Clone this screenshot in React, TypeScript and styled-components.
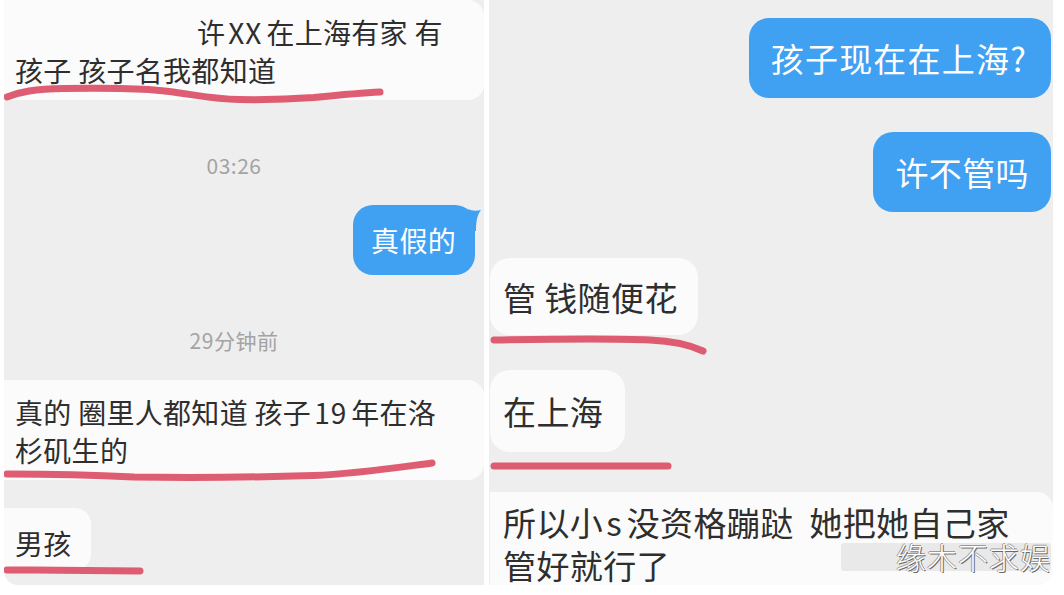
import React from 'react'
import styled, { createGlobalStyle, css } from 'styled-components'

const red = '#dc4f67'
const blue = '#40a0f1'

const GlobalStyle = createGlobalStyle`
  html, body {
    margin: 0;
    padding: 0;
    background: #ffffff;
  }
  body {
    font-family: "Noto Sans CJK SC", "Noto Sans", sans-serif;
  }
`

type Side = 'in' | 'out'
type Size = 'sm' | 'lg'

type Mark = { top: number; width: number; height: number; d: string }

function Underline({ mark }: { mark: Mark }) {
  return (
    <MarkSvg
      style={{ top: mark.top }}
      width={mark.width}
      height={mark.height}
      viewBox={`0 0 ${mark.width} ${mark.height}`}
    >
      <path d={mark.d} fill="none" stroke={red} strokeWidth={7} strokeLinecap="round" strokeLinejoin="round" opacity={0.92} />
    </MarkSvg>
  )
}

function Tail() {
  return (
    <TailSvg width="14" height="22" viewBox="0 0 14 22">
      <path d="M0 0 C4 2 8 2 13 1 C10 5 8 10 8 22 L0 22 Z" fill={blue} />
    </TailSvg>
  )
}

export default function App() {
  return (
    <>
      <GlobalStyle />
      <Page>
        <Panel $corner="left">
          <Row $side="in" $gap={0}>
            <Bubble $tone="white" $size="sm" $cut style={{ width: '100%' }}>
              <Line $indent={182}>
                许<Latin>XX</Latin>在上海有家 有
              </Line>
              <Line>孩子 孩子名我都知道</Line>
            </Bubble>
            <Underline
              mark={{
                top: 84,
                width: 380,
                height: 22,
                d: 'M3 13 C16 8 30 5 60 4.5 C100 4 125 4 150 6 C185 9 205 15 235 15.5 C265 16 290 15 310 13.5 C335 11 355 9 376 8',
              }}
            />
          </Row>
          <Stamp $gap={51}>03:26</Stamp>
          <Row $side="out" $gap={26} $inset={9}>
            <Bubble $tone="blue" $size="sm">
              真假的
              <Tail />
            </Bubble>
          </Row>
          <Stamp $gap={51}>29分钟前</Stamp>
          <Row $side="in" $gap={26}>
            <Bubble $tone="white" $size="sm" $cut style={{ width: '100%' }}>
              <Line>
                真的 圈里人都知道 孩子<Latin>19</Latin>年在洛
              </Line>
              <Line>杉矶生的</Line>
            </Bubble>
            <Underline
              mark={{
                top: 75,
                width: 432,
                height: 28,
                d: 'M3 19 C40 19 90 20 130 22 C200 23 260 22 310 20.5 C350 19 390 13 428 8',
              }}
            />
          </Row>
          <Row $side="in" $gap={28}>
            <Bubble $tone="white" $size="sm" $cut $short>
              男孩
            </Bubble>
            <Underline mark={{ top: 58, width: 140, height: 12, d: 'M3 4 C50 4 100 5 136 5' }} />
          </Row>
        </Panel>

        <Panel $corner="right">
          <Row $side="out" $gap={18} $inset={2}>
            <Bubble $tone="blue" $size="lg" $loose>
              孩子现在在上海?
            </Bubble>
          </Row>
          <Row $side="out" $gap={34} $inset={2}>
            <Bubble $tone="blue" $size="lg">
              许不管吗
            </Bubble>
          </Row>
          <Row $side="in" $gap={46} $inset={1}>
            <Bubble $tone="white" $size="lg">
              管 钱随便花
            </Bubble>
            <Underline
              mark={{ top: 75, width: 220, height: 24, d: 'M4 7 C60 6 120 5 160 7 C185 8 200 12 213 18' }}
            />
          </Row>
          <Row $side="in" $gap={35} $inset={1}>
            <Bubble $tone="white" $size="lg" $tall>
              在上海
            </Bubble>
            <Underline mark={{ top: 90, width: 182, height: 12, d: 'M4 6 C60 6 120 6 178 6' }} />
          </Row>
          <Row $side="in" $gap={40} $inset={1}>
            <Bubble $tone="white" $size="lg" $cut $wide style={{ width: '100%' }}>
              <Line>
                所以小<Latin>s</Latin>没资格蹦跶&nbsp; 她把她自己家
              </Line>
              <Line>管好就行了</Line>
            </Bubble>
          </Row>
          <Watermark>
            <WatermarkShade />
            <WatermarkText>缘木不求娱</WatermarkText>
          </Watermark>
        </Panel>
      </Page>
    </>
  )
}

const Page = styled.div`
  width: 1064px;
  height: 595px;
  box-sizing: border-box;
  padding: 0 11px 10px 4px;
  display: flex;
  gap: 5px;
  background: #ffffff;
  overflow: hidden;
`

const Panel = styled.div<{ $corner: 'left' | 'right' }>`
  position: relative;
  display: flex;
  flex-direction: column;
  background: #eeeeee;
  overflow: hidden;
  ${(p) =>
    p.$corner === 'left'
      ? css`
          width: 480px;
          border-bottom-left-radius: 14px;
        `
      : css`
          flex: 1;
          border-bottom-right-radius: 16px;
        `}
`

const Row = styled.div<{ $side: Side; $gap: number; $inset?: number }>`
  position: relative;
  display: flex;
  flex-shrink: 0;
  justify-content: ${(p) => (p.$side === 'out' ? 'flex-end' : 'flex-start')};
  margin-top: ${(p) => p.$gap}px;
  ${(p) => (p.$side === 'out' ? `margin-right: ${p.$inset ?? 0}px;` : `margin-left: ${p.$inset ?? 0}px;`)}
`

const Bubble = styled.div<{
  $tone: 'white' | 'blue'
  $size: Size
  $cut?: boolean
  $short?: boolean
  $tall?: boolean
  $wide?: boolean
  $loose?: boolean
}>`
  position: relative;
  box-sizing: border-box;
  white-space: nowrap;
  color: ${(p) => (p.$tone === 'blue' ? '#ffffff' : '#2e2e2e')};
  background: ${(p) => (p.$tone === 'blue' ? blue : '#fbfbfb')};
  border-radius: ${(p) => (p.$cut ? '0 16px 16px 0' : '20px')};
  ${(p) =>
    p.$size === 'sm'
      ? css`
          font-size: 28px;
          line-height: 38px;
          letter-spacing: 0.3px;
          padding: ${p.$tone === 'blue' ? '16px 19px 16px 18px' : p.$short ? '16px 19px 8px 11px' : '13px 10px 11px 11px'};
        `
      : css`
          font-size: 33px;
          letter-spacing: ${p.$loose ? '1.2px' : '0.4px'};
          line-height: ${p.$wide ? '43px' : '40px'};
          padding: ${p.$wide
            ? '9px 14px 0 13px'
            : p.$tall
              ? '21px 22px 21px 13px'
              : p.$tone === 'blue'
                ? p.$loose
                  ? '20px 24px 20px 22px'
                  : '20px 22px 20px 22px'
                : '19px 20px 18px 13px'};
        `}
`

const Line = styled.div<{ $indent?: number }>`
  padding-left: ${(p) => p.$indent ?? 0}px;
`

const Latin = styled.span`
  padding: 0 4px 0 3px;
  letter-spacing: 1px;
`

const Stamp = styled.div<{ $gap: number }>`
  flex-shrink: 0;
  margin-top: ${(p) => p.$gap}px;
  padding-right: 20px;
  text-align: center;
  font-size: 21px;
  line-height: 28px;
  letter-spacing: 0.5px;
  color: #a3a3a3;
`

const MarkSvg = styled.svg`
  position: absolute;
  left: 0;
  pointer-events: none;
`

const TailSvg = styled.svg`
  position: absolute;
  top: 4px;
  right: -7px;
`

const Watermark = styled.div`
  position: absolute;
  right: 2px;
  bottom: 12px;
  width: 210px;
  height: 34px;
  display: flex;
  justify-content: flex-end;
  align-items: center;
`

const WatermarkShade = styled.div`
  position: absolute;
  inset: 4px 0 2px 0;
  background: rgba(200, 200, 200, 0.35);
  border-radius: 3px;
`

const WatermarkText = styled.div`
  position: relative;
  font-size: 30px;
  font-weight: 300;
  line-height: 34px;
  letter-spacing: 1px;
  color: #ffffff;
  text-shadow: 1px 1px 0 #6a6a6a, -1px 0 0 #9a9a9a, 0 -1px 0 #9a9a9a;
`
